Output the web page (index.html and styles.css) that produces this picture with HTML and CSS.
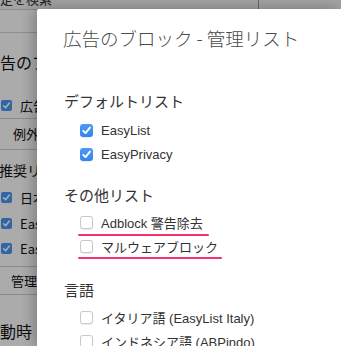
FILE: index.html
```html
<!DOCTYPE html>
<html lang="ja">
<head>
<meta charset="utf-8">
<title>広告のブロック - 管理リスト</title>
<link rel="stylesheet" href="styles.css">
</head>
<body>
<div class="page">
  <div class="bg-header">
    <div class="bg-search"><span class="bg-search-text">設定を検索</span></div>
    <div class="bg-header-right"></div>
  </div>
  <div class="bg-row"></div>
  <div class="bg-col">
    <div class="bg-h1">広告のブロック</div>
    <div class="bg-check"><span class="bg-box"><svg viewBox="0 0 11 11" width="11" height="11"><path d="M2.6 5.8 L4.6 7.8 L8.4 3.1" fill="none" stroke="#fff" stroke-width="1.6" stroke-linecap="round" stroke-linejoin="round"/></svg></span><span>広告をブロック</span></div>
    <div class="bg-btnrow">例外</div>
    <div class="bg-h2">推奨リスト</div>
    <div class="bg-list">
      <div class="bg-check tight"><span class="bg-box"><svg viewBox="0 0 11 11" width="11" height="11"><path d="M2.6 5.8 L4.6 7.8 L8.4 3.1" fill="none" stroke="#fff" stroke-width="1.6" stroke-linecap="round" stroke-linejoin="round"/></svg></span><span>日本語</span></div>
      <div class="bg-check tight"><span class="bg-box"><svg viewBox="0 0 11 11" width="11" height="11"><path d="M2.6 5.8 L4.6 7.8 L8.4 3.1" fill="none" stroke="#fff" stroke-width="1.6" stroke-linecap="round" stroke-linejoin="round"/></svg></span><span>EasyList</span></div>
      <div class="bg-check tight"><span class="bg-box"><svg viewBox="0 0 11 11" width="11" height="11"><path d="M2.6 5.8 L4.6 7.8 L8.4 3.1" fill="none" stroke="#fff" stroke-width="1.6" stroke-linecap="round" stroke-linejoin="round"/></svg></span><span>EasyPrivacy</span></div>
    </div>
    <div class="bg-btnrow second">管理</div>
    <div class="bg-h1 last">起動時</div>
  </div>
</div>
<div class="overlay"></div>
<div class="dialog">
  <h1 class="dlg-title">広告のブロック - 管理リスト</h1>

  <section class="group first-group">
    <h2 class="group-title">デフォルトリスト</h2>
    <ul class="opts">
      <li class="opt"><span class="cb checked"><svg viewBox="0 0 13 13" width="13" height="13"><path d="M3.2 6.8 L5.5 9.1 L9.9 3.6" fill="none" stroke="#fff" stroke-width="1.9" stroke-linecap="round" stroke-linejoin="round"/></svg></span><span class="lbl">EasyList</span></li>
      <li class="opt"><span class="cb checked"><svg viewBox="0 0 13 13" width="13" height="13"><path d="M3.2 6.8 L5.5 9.1 L9.9 3.6" fill="none" stroke="#fff" stroke-width="1.9" stroke-linecap="round" stroke-linejoin="round"/></svg></span><span class="lbl">EasyPrivacy</span></li>
    </ul>
  </section>

  <section class="group">
    <h2 class="group-title">その他リスト</h2>
    <ul class="opts">
      <li class="opt"><span class="mark mark-a"><span class="cb"></span><span class="lbl">Adblock 警告除去</span></span></li>
      <li class="opt"><span class="mark mark-b"><span class="cb"></span><span class="lbl">マルウェアブロック</span></span></li>
    </ul>
  </section>

  <section class="group lang-group">
    <h2 class="group-title">言語</h2>
    <ul class="opts">
      <li class="opt"><span class="cb"></span><span class="lbl">イタリア語 (EasyList Italy)</span></li>
      <li class="opt"><span class="cb"></span><span class="lbl">インドネシア語 (ABPindo)</span></li>
    </ul>
  </section>
</div>
</body>
</html>
```

FILE: styles.css
```css
* { box-sizing: border-box; }

html, body {
  margin: 0;
  padding: 0;
  width: 341px;
  height: 346px;
  overflow: hidden;
  background: #ffffff;
  font-family: "Liberation Sans", "Noto Sans CJK JP", sans-serif;
  color: #222;
}

/* ---------- background settings page ---------- */
.page {
  width: 341px;
  height: 346px;
  background: #ffffff;
  font-family: "Noto Sans CJK JP", "Liberation Sans", sans-serif;
}

.bg-header {
  display: flex;
  height: 10px;
  background: #f4f4f4;
  border-bottom: 1px solid #cfcfcf;
  overflow: hidden;
}
.bg-search {
  width: 259px;
  border-right: 1px solid #9a9a9a;
  overflow: hidden;
}
.bg-search-text {
  display: block;
  margin-top: -9px;
  margin-left: -13px;
  font-size: 13px;
  line-height: 16px;
  color: #333;
  white-space: nowrap;
}
.bg-header-right { flex: 1; }

.bg-row {
  width: 40px;
  height: 23px;
  border-bottom: 1px solid #d4d4d4;
}

.bg-col {
  width: 40px;
  overflow: hidden;
}

.bg-h1 {
  margin-top: 18px;
  margin-left: -16px;
  font-size: 16px;
  line-height: 22px;
  color: #111;
  white-space: nowrap;
}
.bg-h1.last { margin-top: 25px; }

.bg-check {
  display: flex;
  align-items: center;
  gap: 8px;
  height: 20px;
  margin-top: 22px;
  padding-left: 1px;
  font-size: 13px;
  color: #111;
  white-space: nowrap;
}
.bg-check.tight {
  height: 25.5px;
  margin-top: 0;
}
.bg-box {
  flex: none;
  width: 11px;
  height: 11px;
  border-radius: 2px;
  background: #4a98f6;
}
.bg-box svg { display: block; }

.bg-btnrow {
  height: 32px;
  margin-top: 3px;
  border-top: 1px solid #d0d0d0;
  border-bottom: 1px solid #d0d0d0;
  padding-left: 13px;
  font-size: 13px;
  line-height: 30px;
  color: #111;
  white-space: nowrap;
}
.bg-btnrow.second {
  height: 29px;
  margin-top: 4px;
  padding-left: 11px;
  line-height: 27px;
}

.bg-h2 {
  margin-top: 9px;
  margin-left: -1px;
  font-size: 14px;
  line-height: 22px;
  color: #111;
  white-space: nowrap;
}
.bg-list { margin-top: 4px; }

.overlay {
  position: absolute;
  inset: 0;
  background: rgba(0, 0, 0, 0.33);
}

/* ---------- dialog ---------- */
.dialog {
  position: absolute;
  left: 37px;
  top: 9px;
  right: 0;
  bottom: 0;
  background: #ffffff;
  border-top-left-radius: 2px;
  box-shadow: -3px 0 14px rgba(0, 0, 0, 0.28);
  padding: 16px 0 0 26px;
  overflow: hidden;
}

.dlg-title {
  margin: 0;
  font-family: "Noto Sans CJK JP", sans-serif;
  font-weight: 300;
  font-size: 18.5px;
  line-height: 26px;
  color: #4a4a4a;
  white-space: nowrap;
}

.group { margin-top: 18px; }
.group.first-group { margin-top: 39px; }
.group.lang-group { margin-top: 21px; }

.group-title {
  margin: 0;
  padding-left: 1px;
  font-family: "Noto Sans CJK JP", sans-serif;
  font-weight: 400;
  font-size: 15px;
  line-height: 22px;
  color: #333;
}

.opts {
  list-style: none;
  margin: 5px 0 0;
  padding: 0 0 0 17px;
}
.first-group .opts { margin-top: 7px; }

.opt {
  display: flex;
  align-items: center;
  height: 23.5px;
  font-size: 13px;
  color: #333;
  white-space: nowrap;
}

.mark {
  position: relative;
  display: flex;
  align-items: center;
  height: 100%;
}
.mark::after {
  content: "";
  position: absolute;
  left: -2px;
  bottom: -1px;
  height: 2px;
  border-radius: 1px;
  background: #f9306e;
}
.mark-a::after { right: -6px; }
.mark-b::after { right: -4px; }

.cb {
  flex: none;
  display: inline-flex;
  align-items: center;
  justify-content: center;
  width: 13px;
  height: 13px;
  border-radius: 3px;
  background: #fff;
  border: 1px solid #c9c9c9;
  box-shadow: 0 0.5px 1px rgba(0, 0, 0, 0.08);
  margin-right: 8px;
}
.cb.checked {
  border: none;
  background: linear-gradient(#4f9bf5, #3284ee);
}
.cb svg { display: block; }

.lbl {
  font-family: "Liberation Sans", "Noto Sans CJK JP", sans-serif;
}
```
